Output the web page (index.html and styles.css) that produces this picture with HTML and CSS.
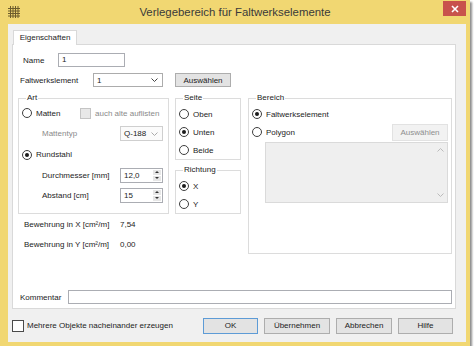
FILE: index.html
```html
<!DOCTYPE html>
<html lang="de">
<head>
  <meta charset="UTF-8" />
  <title>Verlegebereich für Faltwerkselemente</title>
  <link rel="stylesheet" href="styles.css">
</head>
<body>
  <div class="window">
    <div class="titlebar">
      <svg class="app-icon" viewBox="0 0 12 12">
        <path d="M2.5 0V12M5 0V12M7.5 0V12M10 0V12M0 2.5H12M0 5H12M0 7.5H12M0 10H12" stroke="#6d5c2c" stroke-width="1" fill="none"/>
      </svg>
      <div class="title">Verlegebereich für Faltwerkselemente</div>
      <div class="close">
        <svg viewBox="0 0 8 8" width="8" height="8">
          <path d="M1 1L7 7M7 1L1 7" stroke="#fff" stroke-width="1.6"/>
        </svg>
      </div>
    </div>

    <div class="client">
      <div class="tabs"><div class="tab">Eigenschaften</div></div>

      <div class="panel">
        <div class="row name-row">
          <span class="lbl name-lbl">Name</span>
          <div class="textbox name-box">1</div>
        </div>

        <div class="row elem-row">
          <span class="lbl elem-lbl">Faltwerkslement</span>
          <div class="combo elem-combo">
            <span>1</span>
            <svg class="chev" viewBox="0 0 7 4"><path d="M0.5 0.5L3.5 3.5L6.5 0.5" stroke="#444" fill="none"/></svg>
          </div>
          <div class="btn elem-btn">Auswählen</div>
        </div>

        <div class="main">
          <div class="left">
            <div class="groups">
              <fieldset class="group art">
                <legend>Art</legend>
                <div class="opt h20">
                  <span class="radio"></span><span class="matten">Matten</span>
                  <span class="check disabled"></span><span class="dim">auch alte auflisten</span>
                </div>
                <div class="opt h21 sub">
                  <span class="dim sub-lbl">Mattentyp</span>
                  <div class="combo small-combo disabled">
                    <span>Q-188</span>
                    <svg class="chev" viewBox="0 0 7 4"><path d="M0.5 0.5L3.5 3.5L6.5 0.5" stroke="#aaa" fill="none"/></svg>
                  </div>
                </div>
                <div class="opt h21">
                  <span class="radio on"></span><span>Rundstahl</span>
                </div>
                <div class="opt h20 sub">
                  <span class="sub-lbl">Durchmesser [mm]</span>
                  <div class="spin">
                    <span class="spin-val">12,0</span>
                    <span class="spin-btns"><span class="up"></span><span class="down"></span></span>
                  </div>
                </div>
                <div class="opt h20 sub">
                  <span class="sub-lbl">Abstand [cm]</span>
                  <div class="spin">
                    <span class="spin-val">15</span>
                    <span class="spin-btns"><span class="up"></span><span class="down"></span></span>
                  </div>
                </div>
              </fieldset>

              <div class="side">
                <fieldset class="group seite">
                  <legend>Seite</legend>
                  <div class="opt h18"><span class="radio"></span><span>Oben</span></div>
                  <div class="opt h18"><span class="radio on"></span><span>Unten</span></div>
                  <div class="opt h18"><span class="radio"></span><span>Beide</span></div>
                </fieldset>
                <fieldset class="group richtung">
                  <legend>Richtung</legend>
                  <div class="opt h18"><span class="radio on"></span><span>X</span></div>
                  <div class="opt h18"><span class="radio"></span><span>Y</span></div>
                </fieldset>
              </div>
            </div>

            <div class="result"><span class="res-lbl">Bewehrung in X [cm²/m]</span><span>7,54</span></div>
            <div class="result"><span class="res-lbl">Bewehrung in Y [cm²/m]</span><span>0,00</span></div>
          </div>

          <fieldset class="group bereich">
            <legend>Bereich</legend>
            <div class="opt h18"><span class="radio on"></span><span>Faltwerkselement</span></div>
            <div class="opt h18 poly-row">
              <span class="radio"></span><span>Polygon</span>
              <div class="btn disabled poly-btn">Auswählen</div>
            </div>
            <div class="listbox">
              <div class="list-scroll">
                <svg viewBox="0 0 7 4"><path d="M0.5 3.5L3.5 0.5L6.5 3.5" stroke="#bbb" fill="none"/></svg>
                <svg viewBox="0 0 7 4"><path d="M0.5 0.5L3.5 3.5L6.5 0.5" stroke="#bbb" fill="none"/></svg>
              </div>
            </div>
          </fieldset>
        </div>

        <div class="row comment-row">
          <span class="lbl comment-lbl">Kommentar</span>
          <div class="textbox comment-box"></div>
        </div>
      </div>

      <div class="footer">
        <span class="check"></span>
        <span class="multi">Mehrere Objekte nacheinander erzeugen</span>
        <div class="buttons">
          <div class="btn default w55">OK</div>
          <div class="btn w66">Übernehmen</div>
          <div class="btn w56">Abbrechen</div>
          <div class="btn w55">Hilfe</div>
        </div>
      </div>
    </div>
  </div>
</body>
</html>
```

FILE: styles.css
```css
* {
  box-sizing: border-box;
}

body {
  margin: 0;
  background: #fff;
  font-family: "Liberation Sans", Arial, sans-serif;
  font-size: 8px;
  color: #1c1c1c;
  white-space: nowrap;
}

.window {
  width: 470px;
  height: 346px;
  background: #f1d772;
  box-shadow: 2px 2px 2px rgba(0, 0, 0, 0.45);
  display: flex;
  flex-direction: column;
}

/* title bar */
.titlebar {
  height: 24px;
  flex: none;
  display: grid;
  grid-template-columns: 1fr auto 1fr;
  align-items: start;
}

.app-icon {
  width: 12px;
  height: 12px;
  margin: 6px 0 0 8px;
}

.title {
  font-size: 11.4px;
  line-height: 24px;
  color: #3a3a3a;
}

.close {
  justify-self: end;
  width: 23px;
  height: 15px;
  margin: 1px 4px 0 0;
  background: #c8524c;
  display: flex;
  align-items: center;
  justify-content: center;
}

/* client area */
.client {
  flex: 1;
  margin: 0 4px 4px 8px;
  background: #f0f0f0;
  padding: 6px 10px 0 4px;
  display: flex;
  flex-direction: column;
}

.tabs {
  display: flex;
  padding-left: 1px;
}

.tab {
  width: 64px;
  height: 15px;
  background: #fff;
  border: 1px solid #d9d9d9;
  border-bottom: none;
  text-align: center;
  line-height: 14px;
  position: relative;
  z-index: 1;
}

.panel {
  height: 265px;
  margin-top: -1px;
  background: #fff;
  border: 1px solid #d9d9d9;
  padding: 8px 3px 4px 5px;
  display: flex;
  flex-direction: column;
}

.row {
  display: flex;
  align-items: center;
  height: 14px;
}

.lbl {
  flex: none;
}

.name-lbl {
  margin-left: 5px;
  width: 35px;
}

.elem-row {
  margin-top: 6px;
}

.elem-lbl {
  margin-left: 2px;
  width: 73px;
}

.textbox {
  height: 14px;
  border: 1px solid #abadb3;
  background: #fff;
  padding-left: 3px;
  line-height: 12px;
}

.name-box {
  width: 67px;
}

.combo {
  height: 14px;
  border: 1px solid #acacac;
  background: #fff;
  padding: 0 4px 0 3px;
  display: flex;
  align-items: center;
  justify-content: space-between;
}

.combo .chev {
  width: 7px;
  height: 4px;
}

.elem-combo {
  width: 70px;
}

.combo.disabled {
  border-color: #cfcfcf;
  background: #fbfbfb;
}

.btn {
  height: 14px;
  border: 1px solid #adadad;
  background: #e3e3e3;
  display: flex;
  align-items: center;
  justify-content: center;
}

.btn.disabled {
  background: #f2f2f2;
  border-color: #e2e2e2;
  color: #8e8e8e;
}

.elem-btn {
  width: 56px;
  margin-left: 12px;
}

/* group boxes */
.main {
  margin-top: 6px;
  display: flex;
  gap: 7px;
}

.left {
  width: 223px;
}

.groups {
  display: flex;
  gap: 6px;
}

.group {
  margin: 0;
  border: 1px solid #dcdcdc;
  padding: 0 3px;
  min-width: 0;
}

.group legend {
  margin-left: 4px;
  padding: 0 1px;
  line-height: 10px;
}

.art {
  width: 151px;
  padding-bottom: 7px;
}

.side {
  width: 66px;
  display: flex;
  flex-direction: column;
  gap: 5px;
}

.seite {
  padding-top: 2px;
}

.richtung {
  padding-top: 2px;
}

.bereich {
  width: 204px;
  padding-top: 2px;
  padding-bottom: 10px;
}

.opt {
  display: flex;
  align-items: center;
  gap: 4px;
}

.h18 { height: 18px; }
.h20 { height: 20px; }
.h21 { height: 21px; }

.radio {
  flex: none;
  width: 10px;
  height: 10px;
  border: 1px solid #3e3e3e;
  border-radius: 50%;
  background: #fff;
  display: flex;
  align-items: center;
  justify-content: center;
}

.radio.on::after {
  content: "";
  width: 4px;
  height: 4px;
  border-radius: 50%;
  background: #1b1b1b;
}

.check {
  flex: none;
  width: 12px;
  height: 12px;
  border: 1px solid #4a4a4a;
  background: #fff;
}

.matten {
  width: 40px;
}

.check.disabled {
  width: 11px;
  height: 11px;
  border-color: #c4c4c4;
  background: #e8e8e8;
}

.dim {
  color: #8a8a8a;
}

.sub {
  gap: 0;
}

.sub-lbl {
  margin-left: 20px;
  width: 78px;
}

.small-combo {
  width: 43px;
  height: 15px;
}

.spin {
  width: 43px;
  height: 15px;
  border: 1px solid #abadb3;
  background: #fff;
  display: flex;
}

.spin-val {
  flex: 1;
  padding-left: 3px;
  line-height: 13px;
}

.spin-btns {
  width: 10px;
  display: flex;
  flex-direction: column;
  gap: 1px;
  padding: 1px;
}

.spin-btns span {
  flex: 1;
  background: #e6e6e6;
  display: flex;
  align-items: center;
  justify-content: center;
}

.spin-btns .up::after {
  content: "";
  border-left: 2px solid transparent;
  border-right: 2px solid transparent;
  border-bottom: 2px solid #333;
}

.spin-btns .down::after {
  content: "";
  border-left: 2px solid transparent;
  border-right: 2px solid transparent;
  border-top: 2px solid #333;
}

.result {
  height: 20px;
  display: flex;
  align-items: center;
}

.res-lbl {
  margin-left: 6px;
  width: 96px;
}

.poly-btn {
  width: 56px;
  height: 17px;
  margin-left: auto;
}

.listbox {
  margin: 1px 0 0 13px;
  height: 61px;
  background: #efefef;
  border: 1px solid #dadada;
  display: flex;
  justify-content: flex-end;
}

.list-scroll {
  width: 14px;
  padding: 5px 0;
  display: flex;
  flex-direction: column;
  align-items: center;
  justify-content: space-between;
}

.list-scroll svg {
  width: 7px;
  height: 4px;
}

.comment-row {
  margin-top: auto;
}

.comment-lbl {
  margin-left: 2px;
  width: 48px;
}

.comment-box {
  width: 385px;
}

/* footer */
.footer {
  flex: 1;
  display: flex;
  align-items: center;
  padding-right: 3px;
}

.multi {
  margin-left: 3px;
}

.buttons {
  margin-left: auto;
  display: flex;
  gap: 6px;
}

.buttons .btn {
  height: 16px;
}

.btn.default {
  border-color: #5d9bd6;
}

.w55 { width: 55px; }
.w56 { width: 56px; }
.w66 { width: 66px; }
```
